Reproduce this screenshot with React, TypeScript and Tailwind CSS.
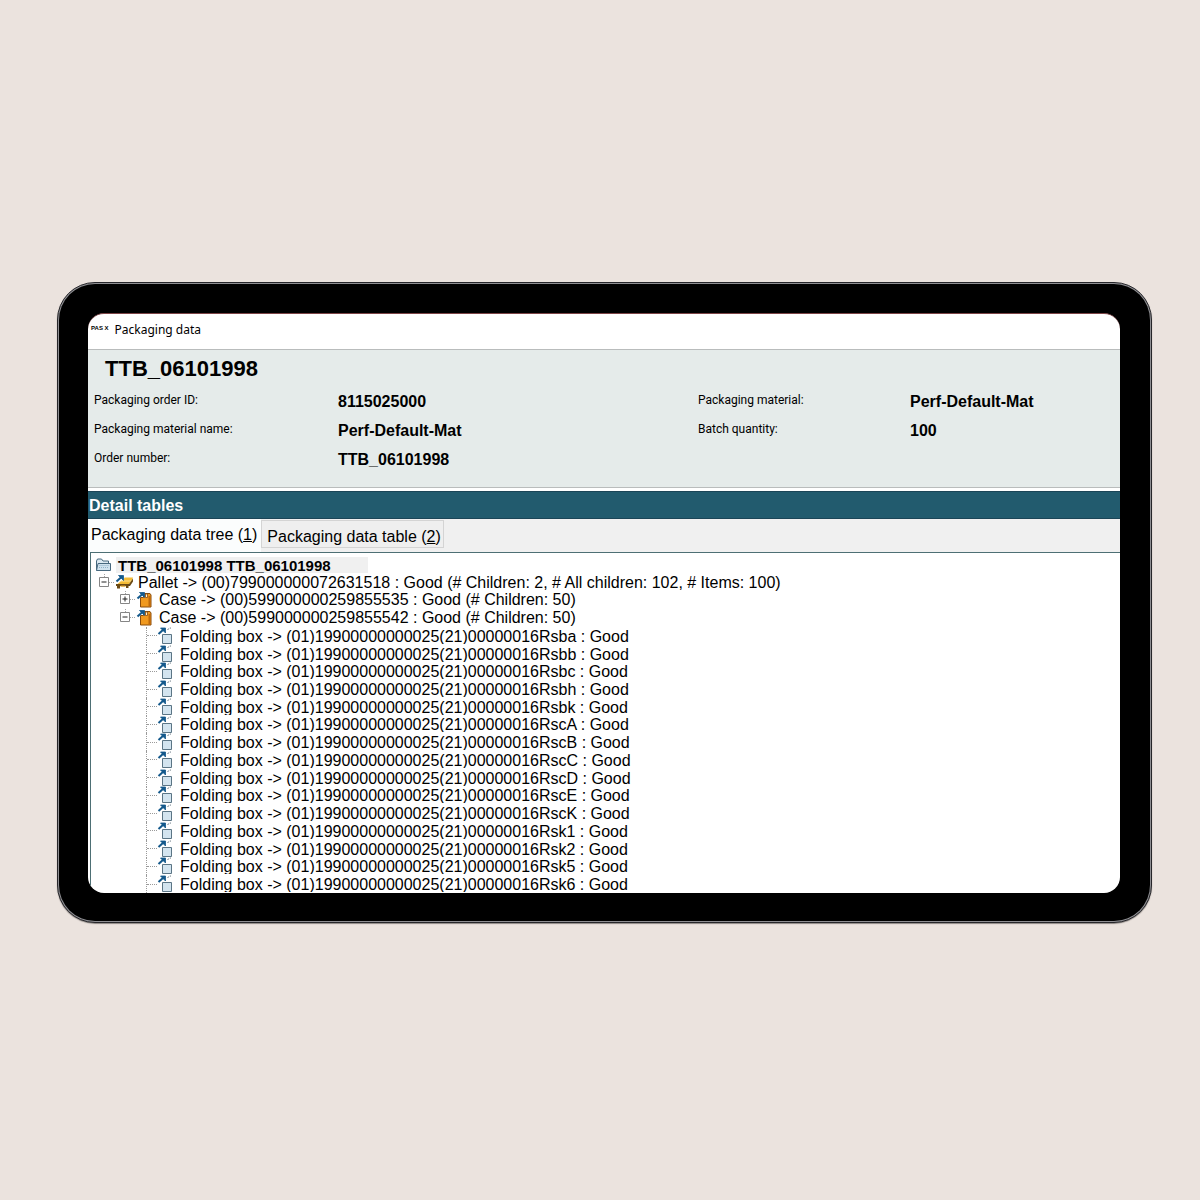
import { useState } from 'react';

const orderInfo = [
  { label: 'Packaging order ID:', value: '8115025000' },
  { label: 'Packaging material:', value: 'Perf-Default-Mat' },
  { label: 'Packaging material name:', value: 'Perf-Default-Mat' },
  { label: 'Batch quantity:', value: '100' },
  { label: 'Order number:', value: 'TTB_06101998' },
];

const serials = [
  'Rsba', 'Rsbb', 'Rsbc', 'Rsbh', 'Rsbk', 'RscA', 'RscB', 'RscC',
  'RscD', 'RscE', 'RscK', 'Rsk1', 'Rsk2', 'Rsk5', 'Rsk6',
];

const tabs = [
  { name: 'Packaging data tree', hotkey: '1' },
  { name: 'Packaging data table', hotkey: '2' },
];

const FolderIcon = () => (
  <svg viewBox="0 0 18 16" className="h-4 w-[18px] shrink-0" fill="none" aria-hidden="true">
    <path d="M2.5 13.5V4l1-2h4L9 4h5.500V7" fill="#dbe9f1" stroke="#47697f" />
    <path d="M2.500 13.500L4 6.500h12.500v7z" fill="#cfe2ee" stroke="#47697f" />
    <path d="M5.500 8.500h9M5 10.500h10" stroke="#8fb2c8" strokeDasharray="1 1" />
  </svg>
);

// shortcut arrow that overlaps the top left of each node icon
const Arrow = () => (
  <>
    <path d="M1.500 7.500l5.500-5" stroke="#14598c" strokeWidth="2" />
    <path d="M3.500 1.500h5v5L6.500 4.500z" fill="#14598c" stroke="#14598c" strokeWidth=".8" />
  </>
);

const PalletIcon = () => (
  <svg viewBox="0 0 20 18" className="h-[18px] w-5 shrink-0" fill="none" aria-hidden="true">
    <path d="M9.500 3.500h8.500l-1 2.500-3.500 4.500H2L6 7h2z" fill="#f4bb35" />
    <path d="M6 7h11" stroke="#fbdc85" strokeWidth="1.200" />
    <path d="M1 10h13l4-5.500v3L15 12h-1.500v2H11v-2H5v2.500H2V12H1z" fill="#6b4a14" />
    <path d="M5.500 11.500h5v1.200h-5z" fill="#e0a128" />
    <Arrow />
  </svg>
);

const CaseIcon = () => (
  <svg viewBox="0 0 20 18" className="h-[18px] w-5 shrink-0" fill="none" aria-hidden="true">
    <path d="M4.500 6.500h3v-4h6.500l1 1.500v12H4.500z" fill="#f0991f" stroke="#8a4d0c" />
    <path d="M12.500 5h2v10.500h-2z" fill="#bf690c" />
    <path d="M9.500 3v3.500h2V3z" fill="#fff3d6" stroke="#8a4d0c" strokeWidth=".8" />
    <Arrow />
  </svg>
);

const BoxIcon = () => (
  <svg viewBox="0 0 20 18" className="h-[18px] w-5 shrink-0" fill="none" aria-hidden="true">
    <path d="M5.500 7.500h9v9h-9z" fill="#d3e4ef" stroke="#5b7585" />
    <path d="M10.500 3c1-1.500 2-2 3.500-2" stroke="#6f7f8a" strokeDasharray="2 1" />
    <path d="M1.500 7l5.500-5" stroke="#14598c" strokeWidth="2" />
    <path d="M3.500 1h5v5L6.500 4z" fill="#14598c" stroke="#14598c" strokeWidth=".8" />
  </svg>
);

type ExpanderProps = { open: boolean; label: string; onToggle: () => void };

const Expander = ({ open, label, onToggle }: ExpanderProps) => (
  <button
    type="button"
    aria-label={label}
    aria-expanded={open}
    onClick={onToggle}
    className="flex w-[21px] shrink-0 items-center justify-center"
  >
    <svg viewBox="0 0 21 18" className="h-[18px] w-[21px]" fill="none">
      <path d="M10.500 0v4M15 8.500h6" stroke="#a3a3a3" strokeDasharray="1 1" />
      <path d="M5.500 3.500h9v9h-9z" fill="#fff" stroke="#858585" />
      <path d={open ? 'M7.500 8h5' : 'M7.500 8h5M10 5.500v5'} stroke="#222" />
    </svg>
  </button>
);

const App = () => {
  const [activeTab, setActiveTab] = useState('1');
  const [closed, setClosed] = useState<string[]>(['case1']);

  const isOpen = (id: string) => !closed.includes(id);
  const toggle = (id: string) =>
    setClosed((prev) => (prev.includes(id) ? prev.filter((c) => c !== id) : [...prev, id]));

  return (
    <main className="flex min-h-screen items-center bg-[#ebe3de] pt-[5px] pr-12 pl-[57px] font-['Liberation_Sans',Arial,sans-serif] text-black">
      <div className="w-full rounded-[38px] border border-[#26262a] bg-[#8e8e92] p-px shadow-[0_1px_1px_#8c8682]">
        <div className="rounded-[36px] bg-black pt-[29px] pr-[30px] pb-7 pl-[29px]">
          <section className="overflow-hidden rounded-2xl border-t border-[#7c4446] bg-white">
            <header className="flex h-[35px] items-center gap-1 pl-[3px]">
              <span className="pb-2 text-[6px] leading-none font-black">PAS X</span>
              <h1 className="pb-1 pl-0.5 font-['Noto_Sans',sans-serif] text-[12px] leading-5">Packaging data</h1>
            </header>

            <div className="h-[139px] border-y border-[#b9bcbc] bg-[#e5ebea] pt-1.5">
              <h2 className="pl-[17px] text-[22px] leading-[26px] font-bold">TTB_06101998</h2>
              <dl className="grid grid-cols-[7fr_5fr] pt-[5px]">
                {orderInfo.map(({ label, value }) => (
                  <div key={label} className="flex h-[29px] items-center pl-1.5 even:pl-2 odd:[&>dt]:w-[244px]">
                    <dt className="w-[212px] shrink-0 pb-1 font-['Roboto',sans-serif] text-[12px]">{label}</dt>
                    <dd className="text-[16px] font-bold">{value}</dd>
                  </div>
                ))}
              </dl>
            </div>

            <h3 className="mt-[3px] flex h-7 items-center border-y border-[#1b4557] bg-[#225b6e] pt-0.5 pl-px text-[16px] font-bold text-white">
              Detail tables
            </h3>

            <div role="tablist" className="flex h-[33px] items-end bg-[#f0f0f0]">
              {tabs.map(({ name, hotkey }) => (
                <button
                  key={hotkey}
                  type="button"
                  role="tab"
                  aria-selected={activeTab === hotkey}
                  onClick={() => setActiveTab(hotkey)}
                  className={
                    activeTab === hotkey
                      ? 'h-full bg-[#fbfdfd] pr-1 pb-0.5 pl-[3px] text-[16px]'
                      : 'mb-1 h-7 border border-[#d4d4d4] bg-[#efefef] pt-1 pr-0.5 pl-[5px] text-[16px]'
                  }
                >
                  {name} (<span className="underline">{hotkey}</span>)
                </button>
              ))}
            </div>

            <div className="ml-0.5 h-[341px] overflow-hidden border-t border-l border-[#4d6f74] pt-[3px] pl-[3px]">
              <ul className="grid h-[337px] grid-rows-[repeat(19,minmax(0,1fr))] text-[16px] leading-[18px] whitespace-nowrap">
                <li className="flex items-center">
                  <FolderIcon />
                  <span className="ml-1 h-4 w-[252px] overflow-hidden bg-[#f0f0f0] pl-0.5 text-[15px] leading-[18px] font-bold">
                    TTB_06101998 TTB_06101998
                  </span>
                </li>
                <li className="flex items-center">
                  <Expander open={isOpen('pallet')} label="Toggle pallet" onToggle={() => toggle('pallet')} />
                  <PalletIcon />
                  <span className="pl-[3px]">
                    Pallet -&gt; (00)799000000072631518 : Good (# Children: 2, # All children: 102, # Items: 100)
                  </span>
                </li>
                {isOpen('pallet') && (
                  <>
                    <li className="flex items-center pl-[21px]">
                      <Expander open={isOpen('case1')} label="Toggle first case" onToggle={() => toggle('case1')} />
                      <CaseIcon />
                      <span className="pl-[3px]">Case -&gt; (00)599000000259855535 : Good (# Children: 50)</span>
                    </li>
                    <li className="flex items-center pl-[21px]">
                      <Expander open={isOpen('case2')} label="Toggle second case" onToggle={() => toggle('case2')} />
                      <CaseIcon />
                      <span className="pl-[3px]">Case -&gt; (00)599000000259855542 : Good (# Children: 50)</span>
                    </li>
                    {isOpen('case2') &&
                      serials.map((serial) => (
                        <li key={serial} className="flex items-center pl-[52px]">
                          <span className="flex w-[11px] shrink-0 items-center self-stretch border-l border-dotted border-[#9a9a9a]">
                            <span className="w-full border-t border-dotted border-[#9a9a9a]" />
                          </span>
                          <BoxIcon />
                          <span className="h-4 overflow-hidden pl-[3px]">
                            Folding box -&gt; (01)19900000000025(21)00000016{serial} : Good
                          </span>
                        </li>
                      ))}
                  </>
                )}
              </ul>
            </div>
          </section>
        </div>
      </div>
    </main>
  );
};

export default App;
